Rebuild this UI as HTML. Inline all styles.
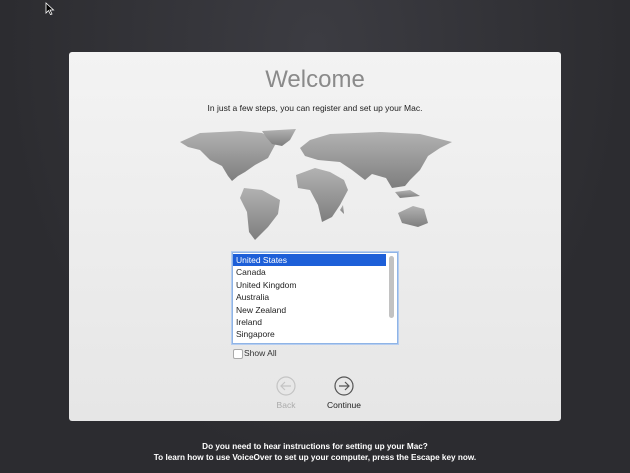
<!DOCTYPE html>
<html><head><style>
body{margin:0;width:630px;height:473px;overflow:hidden;background:radial-gradient(ellipse at 50% 10%,#3c3c42,#2c2c30 70%);font-family:"Liberation Sans",sans-serif;position:relative}
.panel{position:absolute;left:69px;top:52px;width:492px;height:369px;background:linear-gradient(#f3f3f3,#e6e6e6);border-radius:3px}
.a{position:absolute}
.list{position:absolute;left:232px;top:252px;width:164px;height:90px;background:#fff;border:1px solid #8fb4e6;box-shadow:0 0 0 1px #b5cdf0}
.row{height:12.4px;font-size:8.5px;line-height:12.4px;padding-left:3px;color:#222}
.sel{background:#1d5fd8;color:#fff;width:150px;margin-top:1px}
</style></head><body>
<svg class="a" style="left:45px;top:2px" width="10" height="14"><path d="M1 1 L1 11 L3.5 8.5 L5.5 12.5 L7 12 L5 8 L8.5 8 Z" fill="#000" stroke="#fff" stroke-width="0.8"/></svg>
<div class="panel"></div>
<div class="a" style="left:0;width:630px;top:66px;text-align:center;font-size:24px;color:#8a8a8a">Welcome</div>
<div class="a" style="left:0;width:630px;top:103px;text-align:center;font-size:8.5px;color:#222">In just a few steps, you can register and set up your Mac.</div>
<svg class="a" style="left:0;top:0" width="630" height="473">
<defs><linearGradient id="g" x1="0" y1="0" x2="0" y2="1"><stop offset="0" stop-color="#b2b2b2"/><stop offset="1" stop-color="#7e7e7e"/></linearGradient></defs>
<g fill="url(#g)">
<path d="M180,142 L200,133 L240,131 L262,133 L275,140 L282,139 L275,145 L268,158 L255,165 L245,172 L238,176 L232,181 L228,176 L222,166 L210,160 L200,150 L188,147Z"/>
<path d="M262,131 L296,129 L290,140 L282,146 L272,144 L266,137Z"/>
<path d="M244,188 L262,190 L280,200 L278,214 L268,227 L255,240 L249,232 L247,212 L240,198Z"/>
<path d="M300,148 L310,140 L330,134 L380,132 L420,134 L452,142 L440,148 L428,156 L420,170 L410,180 L405,186 L392,188 L386,178 L372,174 L365,180 L352,170 L340,162 L318,160 L305,156Z"/>
<path d="M296,175 L315,168 L330,172 L344,180 L348,190 L340,205 L332,217 L322,222 L318,205 L310,190 L298,188Z"/>
<path d="M398,213 L413,206 L424,209 L428,223 L418,227 L402,223Z"/>
<path d="M395,192 L410,190 L420,196 L400,198Z"/>
<path d="M340,210 L343,205 L344,214Z"/>
</g></svg>
<div class="list">
<div class="row sel">United States</div>
<div class="row">Canada</div>
<div class="row">United Kingdom</div>
<div class="row">Australia</div>
<div class="row">New Zealand</div>
<div class="row">Ireland</div>
<div class="row">Singapore</div>
<div class="a" style="left:156px;top:3px;width:5px;height:62px;background:#c2c2c2;border-radius:3px"></div>
</div>
<div class="a" style="left:233px;top:349px;width:8px;height:8px;background:#fff;border:1px solid #aaa;border-radius:2px"></div>
<div class="a" style="left:244px;top:348px;font-size:8.5px;color:#333">Show All</div>
<svg class="a" style="left:0;top:0" width="630" height="473">
<circle cx="286" cy="386" r="9" fill="none" stroke="#c4c4c4" stroke-width="1.2"/>
<path d="M291,386 H281 M285,382 L281,386 L285,390" fill="none" stroke="#c4c4c4" stroke-width="1.2"/>
<circle cx="344" cy="386" r="9" fill="none" stroke="#555" stroke-width="1.2"/>
<path d="M339,386 H349 M345,382 L349,386 L345,390" fill="none" stroke="#555" stroke-width="1.2"/>
</svg>
<div class="a" style="left:266px;width:40px;top:400px;text-align:center;font-size:8.5px;color:#aaa">Back</div>
<div class="a" style="left:319px;width:50px;top:400px;text-align:center;font-size:8.5px;color:#222">Continue</div>
<div class="a" style="left:0;width:630px;top:441px;text-align:center;font-size:8.2px;font-weight:bold;color:#fff;line-height:11px">Do you need to hear instructions for setting up your Mac?<br>To learn how to use VoiceOver to set up your computer, press the Escape key now.</div>
</body></html>
